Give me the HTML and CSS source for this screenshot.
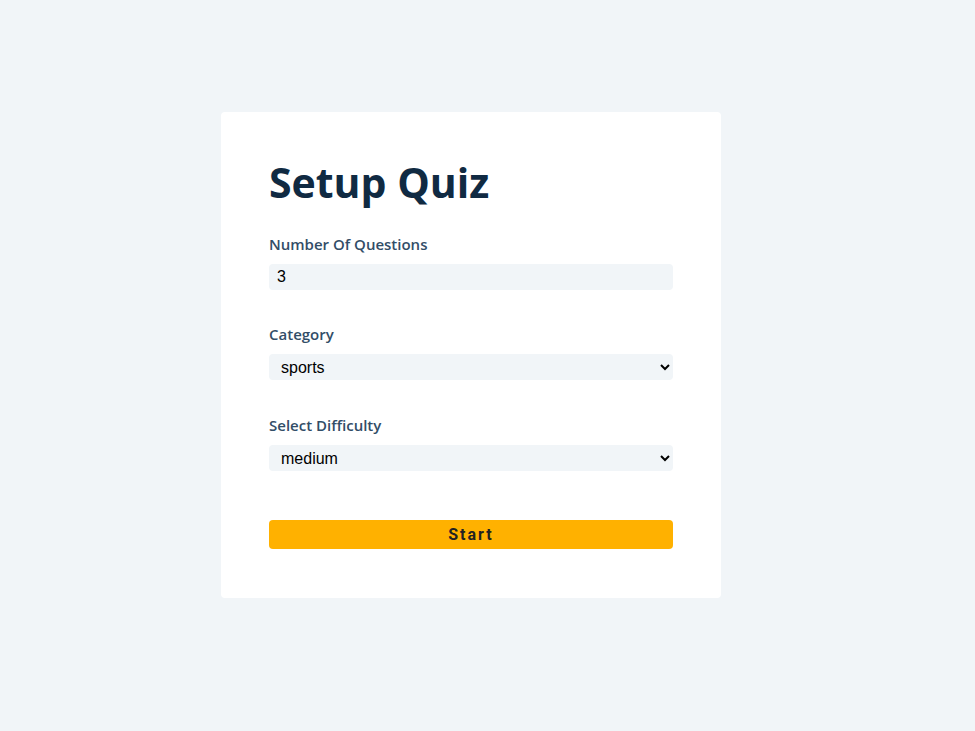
FILE: index.html
```html
<!DOCTYPE html>
<html>
<head>
<meta charset="utf-8">
<link rel="stylesheet" href="styles.css">
</head>
<body>
<main class="page">
  <section class="quiz-card">
    <form class="setup-form">
      <h2 class="title">Setup Quiz</h2>
      <div class="form-control">
        <label class="label" for="amount">Number Of Questions</label>
        <input class="field" type="number" id="amount" value="3">
      </div>
      <div class="form-control form-control-wide">
        <label class="label" for="category">Category</label>
        <select class="field" id="category">
          <option>sports</option>
        </select>
      </div>
      <div class="form-control">
        <label class="label" for="difficulty">Select Difficulty</label>
        <select class="field" id="difficulty">
          <option>medium</option>
        </select>
      </div>
      <button class="submit-btn" type="button">Start</button>
    </form>
  </section>
</main>
</body>
</html>
```
FILE: styles.css
```css
* { box-sizing: border-box; }
html, body { margin: 0; padding: 0; }
body {
  background: #f1f5f8;
  font-family: "Open Sans", "Noto Sans", sans-serif;
  color: #102a42;
}
.page {
  padding: 112px 0 0 221px;
}
.quiz-card {
  width: 500px;
  background: #fff;
  border-radius: 4px;
  padding: 48px 48px 49px;
}
.setup-form { display: flex; flex-direction: column; }
.title {
  margin: 0 0 29px;
  font-size: 41px;
  line-height: 44px;
  font-weight: 700;
  letter-spacing: 0;
  color: #102a42;
}
.form-control {
  display: flex;
  flex-direction: column;
  margin-bottom: 33px;
}
.form-control-wide { margin-bottom: 34px; }
.label {
  font-size: 15px;
  line-height: 22px;
  font-weight: 600;
  color: #324d67;
  margin-bottom: 9px;
}
.field {
  height: 26px;
  border: none;
  border-radius: 4px;
  background: #f1f5f8;
  padding: 0 8px 0 8px;
  font-family: "Liberation Sans", Arial, sans-serif;
  font-size: 16px;
  color: #000;
  width: 100%;
}
.field:focus { outline: none; }
.submit-btn {
  margin-top: 16px;
  height: 29px;
  border: none;
  border-radius: 4px;
  background: #ffb100;
  font-family: Roboto, "Liberation Sans", sans-serif;
  font-size: 16px;
  font-weight: 700;
  letter-spacing: 2px;
  color: #222;
  cursor: pointer;
}
```
